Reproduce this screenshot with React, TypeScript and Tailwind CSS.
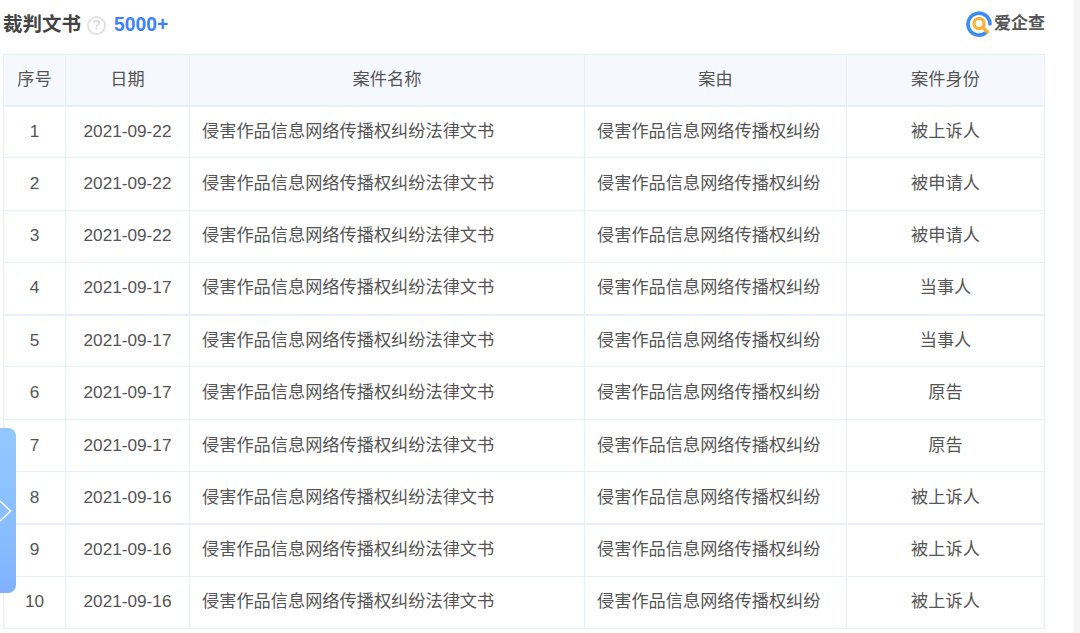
const CASE_TITLE = '侵害作品信息网络传播权纠纷法律文书';
const CASE_CAUSE = '侵害作品信息网络传播权纠纷';

const rows = [
    { id: 1, date: '2021-09-22', role: '被上诉人' },
    { id: 2, date: '2021-09-22', role: '被申请人' },
    { id: 3, date: '2021-09-22', role: '被申请人' },
    { id: 4, date: '2021-09-17', role: '当事人' },
    { id: 5, date: '2021-09-17', role: '当事人' },
    { id: 6, date: '2021-09-17', role: '原告' },
    { id: 7, date: '2021-09-17', role: '原告' },
    { id: 8, date: '2021-09-16', role: '被上诉人' },
    { id: 9, date: '2021-09-16', role: '被上诉人' },
    { id: 10, date: '2021-09-16', role: '被上诉人' },
];

function Logo() {
    return (
        <div className="-mr-[1px] mb-[2px] flex items-center">
            <svg width="26" height="26" viewBox="0 0 26 26" fill="none">
                <path d="M19.5 22A11 11 0 1 1 24 13" stroke="#3b8cf5" strokeWidth="3.6" strokeLinecap="round" />
                <circle cx="13" cy="12.5" r="5" stroke="#f9b233" strokeWidth="3.2" />
                <path d="M17 16.5L21.5 21" stroke="#f9b233" strokeWidth="3.2" strokeLinecap="round" />
            </svg>
            <span className="ml-[2px] text-[17px] font-bold text-[#555]">爱企查</span>
        </div>
    );
}

function App() {
    return (
        <div className="relative h-[633px] w-[1080px] overflow-hidden bg-white font-['Liberation_Sans','Noto_Sans_CJK_SC',sans-serif] text-[#555]">
            <div className="h-[633px] w-[1074px] bg-white pl-[3px]">
                <div className="flex h-[54px] w-[1041px] items-center justify-between pb-[4px]">
                    <div className="flex items-center">
                        <span className="text-[19.5px] font-bold text-[#444]">裁判文书</span>
                        <span className="ml-[6px] flex h-[19px] w-[19px] items-center justify-center rounded-full border-2 border-[#e2e2e2] text-[13px] text-[#ccc]">?</span>
                        <span className="ml-[8px] text-[19.3px] font-bold text-[#3b82f6]">5000+</span>
                    </div>
                    <Logo />
                </div>

                <table className="w-[1041px] table-fixed border-collapse text-[17.2px]">
                    <colgroup>
                        <col className="w-[62px]" />
                        <col className="w-[124px]" />
                        <col className="w-[395px]" />
                        <col className="w-[262px]" />
                        <col className="w-[198px]" />
                    </colgroup>
                    <thead>
                        <tr className="h-[51px] bg-[#f5f9ff]">
                            <th className="border border-b-2 border-[#e6effb] text-center font-normal">序号</th>
                            <th className="border border-b-2 border-[#e6effb] text-center font-normal">日期</th>
                            <th className="border border-b-2 border-[#e6effb] text-center font-normal">案件名称</th>
                            <th className="border border-b-2 border-[#e6effb] text-center font-normal">案由</th>
                            <th className="border border-b-2 border-[#e6effb] text-center font-normal">案件身份</th>
                        </tr>
                    </thead>
                    <tbody>
                        {rows.map(row => (
                            <tr key={row.id} className={row.id === 4 || row.id === 8 ? 'h-[52.3px] border-b-2 border-[#e6effb]' : 'h-[52.3px]'}>
                                <td className="border border-[#e6effb] text-center">{row.id}</td>
                                <td className="border border-[#e6effb] text-center">{row.date}</td>
                                <td className="border border-[#e6effb] pl-[12px]">{CASE_TITLE}</td>
                                <td className="border border-[#e6effb] pl-[12px]">{CASE_CAUSE}</td>
                                <td className="border border-[#e6effb] text-center">{row.role}</td>
                            </tr>
                        ))}
                    </tbody>
                </table>
            </div>

            {/* gray page strip on the right */}
            <div className="absolute right-0 top-0 h-full w-[6px] bg-[#f5f5f5]" />

            {/* collapsed side tab */}
            <div className="absolute left-0 top-[428px] flex h-[165px] w-[16px] items-center rounded-r-[8px] bg-gradient-to-b from-[#93c8ff] via-[#86bcff] via-70% to-[#7fb0ff]">
                <svg width="12" height="22" viewBox="0 0 12 22" fill="none">
                    <path d="M0 1L10.5 11L0 21" stroke="white" strokeWidth="1.6" />
                </svg>
            </div>
        </div>
    );
}

export default App;
